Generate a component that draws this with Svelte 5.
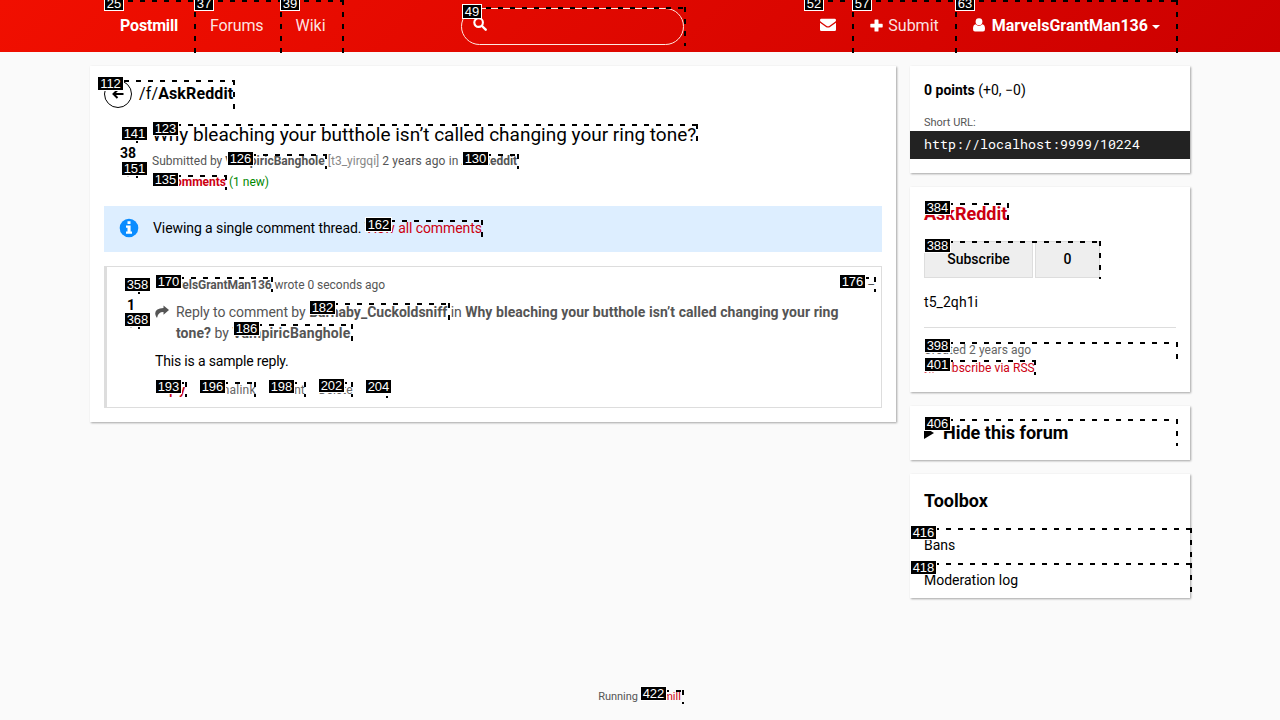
<script>
  // Element outlines: id, label x/y, outline left/top/right/bottom
  const marks = [
    [25, 104, -4, 104, 0, 196, 53],
    [37, 194, -4, 194, 0, 282, 53],
    [39, 280, -4, 280, 0, 344, 53],
    [49, 462, 4, 462, 7, 686, 46],
    [52, 804, -4, 804, 0, 854, 53],
    [57, 852, -4, 852, 0, 957, 53],
    [63, 955, -4, 955, 0, 1178, 53],
    [112, 97, 76, 100, 80, 235, 109],
    [141, 121, 126, 126, 129, 138, 143],
    [151, 121, 161, 126, 164, 138, 178],
    [123, 152, 121, 152, 124, 698, 142],
    [126, 227, 151, 227, 154, 327, 169],
    [130, 462, 151, 462, 154, 519, 169],
    [135, 152, 172, 152, 175, 227, 190],
    [162, 365, 217, 366, 220, 483, 237],
    [170, 155, 274, 155, 277, 273, 292],
    [176, 839, 274, 864, 277, 876, 292],
    [358, 124, 277, 128, 280, 140, 294],
    [368, 124, 312, 128, 315, 140, 329],
    [182, 309, 300, 309, 303, 450, 320],
    [186, 233, 321, 233, 324, 353, 341],
    [193, 155, 379, 155, 382, 187, 397],
    [196, 199, 379, 199, 382, 256, 397],
    [198, 268, 379, 268, 382, 306, 397],
    [202, 318, 378, 318, 382, 353, 397],
    [204, 365, 379, 365, 384, 388, 398],
    [384, 924, 200, 924, 203, 1009, 220],
    [388, 924, 238, 924, 241, 1101, 279],
    [398, 924, 338, 924, 342, 1178, 359],
    [401, 924, 357, 924, 360, 1036, 375],
    [406, 924, 416, 924, 419, 1178, 446],
    [416, 910, 525, 910, 528, 1192, 563],
    [418, 910, 560, 910, 563, 1192, 595],
    [422, 640, 686, 640, 690, 684, 704]
  ];
</script>

<header>
  <nav>
    <div class="group">
      <a class="item strong brand" href="#home">Postmill</a>
      <a class="item tight" href="#forums">Forums</a>
      <a class="item" href="#wiki">Wiki</a>
    </div>
    <div class="search">
      <svg width="14" height="14" viewBox="0 0 14 14"><circle cx="5.6" cy="5.6" r="4.3" fill="none" stroke="#fff" stroke-width="2.1" /><path d="M9 9l3.7 3.7" stroke="#fff" stroke-width="2.4" stroke-linecap="round" /></svg>
    </div>
    <div class="group">
      <a class="item" href="#mail" aria-label="Messages">
        <svg width="16" height="14" viewBox="0 0 16 14"><path fill="#fff" d="M0 2.2Q0 .8 1.4.8h13.2Q16 .8 16 2.2q0 1-1.2 1.9L9.600 7.700Q8 8.900 6.400 7.700L1.200 4.100Q0 3.200 0 2.200zM0 4.700l5.600 4Q8 10.500 10.400 8.700L16 4.700v7q0 1.400-1.400 1.400H1.400Q0 13.100 0 11.700z" /></svg>
      </a>
      <a class="item submit" href="#submit">
        <svg width="13" height="13" viewBox="0 0 13 13"><path fill="#fff" d="M5.100.5h2.800q.6 0 .6.6v3.700h3.600q.6 0 .6.6v2.400q0 .6-.6.6H8.500v3.500q0 .6-.6.6H5.100q-.6 0-.6-.6V8.400H.9q-.6 0-.6-.6V5.400q0-.6.600-.6h3.600V1.100q0-.6.6-.6z" /></svg>
        Submit
      </a>
      <a class="item strong user" href="#user">
        <svg width="12" height="14" viewBox="0 0 12 14"><circle cx="6" cy="3.700" r="3.400" fill="#fff" /><path fill="#fff" d="M2.700 6.200Q6 9.400 9.300 6.200 12 6.500 12 11q0 2.600-2 2.600H2Q0 13.600 0 11 0 6.500 2.700 6.200z" /></svg>
        <span>MarvelsGrantMan136</span>
        <i class="caret"></i>
      </a>
    </div>
  </nav>
</header>

<div class="layout">
  <main class="card">
    <div class="crumb">
      <span class="back"><svg width="12" height="10" viewBox="0 0 12 10"><path d="M11.500 5H1.500M5.500 1L1.500 5l4 4" fill="none" stroke="#000" stroke-width="2" /></svg></span>
      <span class="path">/f/<b>AskReddit</b></span>
    </div>

    <article class="submission">
      <div class="vote"><span class="arrow up"></span><b>38</b><span class="arrow down"></span></div>
      <div>
        <h1>Why bleaching your butthole isn’t called changing your ring tone?</h1>
        <p class="meta first">Submitted by <b class="author">VampiricBanghole</b> <span class="faint">[t3_yirgqi]</span> <span class="when">2 years ago in</span> <b>AskReddit</b></p>
        <p class="meta"><b class="red">32 comments</b> <span class="green">(1 new)</span></p>
      </div>
    </article>

    <div class="alert">
      <svg width="20" height="20" viewBox="0 0 20 20"><circle cx="10" cy="10" r="9.300" fill="#0a8cff" /><path fill="#fff" d="M8.500 3.300h3v2.700h-3zM7 7.500h4.600v6h1.400v2.200H7v-2.200h1.500V9.700H7z" /></svg>
      <span>Viewing a single comment thread. <a href="#all" class="red">View all comments</a></span>
    </div>

    <article class="comment">
      <div class="vote"><span class="arrow up active"></span><b>1</b><span class="arrow down"></span></div>
      <div class="body">
        <div class="head"><span><b>MarvelsGrantMan136</b> wrote 0 seconds ago</span><span class="collapse">–</span></div>
        <div class="context">
          <svg width="14" height="13" viewBox="0 0 14 13"><path fill="#555" d="M8.500.4L14 5 8.500 9.700V7.100Q3.200 6.900 2.200 12.600H1.500Q.2 10.500.2 8.300.5 3 8.500 2.900z" /></svg>
          <p><span class="lead">Reply to comment by</span> <b>Barnaby_Cuckoldsniff</b> <span class="lead">in</span> <b class="title">Why bleaching your butthole isn’t called changing your ring tone?</b> by <b class="target">VampiricBanghole</b></p>
        </div>
        <p class="reply">This is a sample reply.</p>
        <div class="actions"><b class="red">Reply</b><span class="perma">Permalink</span><span class="parent">Parent</span><span>Delete</span></div>
      </div>
    </article>
  </main>

  <aside>
    <section class="card points">
      <p><b>0 points</b> (+0, −0)</p>
      <p class="label">Short URL:</p>
      <div class="url">http://localhost:9999/10224</div>
    </section>

    <section class="card forum">
      <h2 class="red">AskReddit</h2>
      <div class="subscribe"><span>Subscribe</span><span>0</span></div>
      <p class="desc">t5_2qh1i</p>
      <hr />
      <p class="small">Created 2 years ago</p>
      <p class="small red rss"><svg width="10" height="10" viewBox="0 0 10 10"><circle cx="1.500" cy="8.500" r="1.300" fill="#c01" /><path d="M.5 4.200a5.300 5.300 0 0 1 5.300 5.300M.5 1a8.500 8.500 0 0 1 8.500 8.500" fill="none" stroke="#c01" stroke-width="1.400" /></svg>Subscribe via RSS</p>
    </section>

    <section class="card hide">
      <h2><i class="triangle"></i>Hide this forum</h2>
    </section>

    <section class="card toolbox">
      <h2>Toolbox</h2>
      <p>Bans</p>
      <p>Moderation log</p>
    </section>
  </aside>
</div>

<footer>Running <a href="#postmill" class="red">Postmill</a></footer>

<div class="marks">
  {#each marks as [id, lx, ly, x, y, r, b]}
    <div class="outline" style="left:{x}px;top:{y}px;width:{r - x}px;height:{b - y}px"></div>
  {/each}
  {#each marks as [id, lx, ly]}
    <span class="tag" class:wide={id > 99} style="left:{lx}px;top:{ly}px">{id}</span>
  {/each}
</div>

<style>
  :global(body) { background: #fafafa; font: 14px/21px Roboto, sans-serif; color: #000; overflow: hidden; }
  :global(#app) { height: 720px; display: flex; flex-direction: column; position: relative; overflow: hidden; }
  p, h1, h2 { margin: 0; }
  a { color: inherit; text-decoration: none; }
  svg { display: block; flex: none; }
  .red { color: #c01; }
  header { flex: none; height: 52px; background: linear-gradient(135deg, #f10f00, #c00); }
  nav { width: 1072px; height: 52px; margin: 0 auto; display: flex; justify-content: space-between; align-items: center; }
  .group { display: flex; height: 50px; margin-bottom: 2px; }
  .item { display: flex; align-items: center; padding: 0 16px; font-size: 16px; color: rgba(255, 255, 255, .9); }
  .item.strong { font-weight: 700; color: #fff; }
  .brand { letter-spacing: -.18px; }
  .tight { letter-spacing: -.15px; }
  .submit { padding: 0 17px 0 18px; gap: 5px; }
  .user { gap: 6px; padding-left: 17px; }
  .user svg { margin-right: 1px; }
  .caret { border: 4px solid transparent; border-top-color: #fff; border-bottom: 0; margin: 4px 0 0 -2px; }
  .search { box-sizing: border-box; width: 223px; height: 37px; margin-top: 1px; border: 1px solid #ffe8e0; border-radius: 19px; padding: 8px 11px; }

  .layout { width: 1100px; margin: 14px auto 0; display: flex; gap: 14px; align-items: flex-start; }
  .card { background: #fff; box-shadow: 1px 1px 2px rgba(0, 0, 0, .35); box-sizing: border-box; }
  main { width: 806px; height: 356px; padding: 14px; }
  .crumb { display: flex; align-items: center; gap: 7px; height: 28px; font-size: 16px; }
  .path { padding-bottom: 2px; letter-spacing: .12px; }
  .back { box-sizing: border-box; width: 28px; height: 28px; border: 1px solid #000; border-radius: 50%; display: flex; align-items: center; justify-content: center; }
  .submission { display: flex; height: 84px; margin-top: 14px; }
  .vote { display: flex; flex-direction: column; align-items: center; width: 48px; font-size: 14px; }
  .arrow { width: 8px; height: 8px; border-left: 2px solid #bbb; border-top: 2px solid #bbb; transform: rotate(45deg); }
  .arrow.down { transform: rotate(225deg); }
  .arrow.active { border-color: #f70; }
  .submission .vote { padding-top: 10px; height: 60px; box-sizing: border-box; line-height: 23px; }
  h1 { font-size: 19px; font-weight: 400; line-height: 25px; }
  .meta { font-size: 12px; color: #555; line-height: 21px; }
  .meta.first { margin-top: 4px; }
  .author { letter-spacing: .04px; }
  .when { letter-spacing: .16px; }
  .faint { color: #888; }
  .green { color: #080; }
  .alert { box-sizing: border-box; display: flex; align-items: center; gap: 14px; height: 46px; padding: 0 0 2px 15px; background: #def; letter-spacing: -.08px; }
  .comment { box-sizing: border-box; display: flex; height: 142px; margin-top: 14px; border: 1px solid #ddd; border-left-width: 3px; }
  .comment .vote { padding-top: 17px; height: 60px; box-sizing: border-box; line-height: 22px; }
  .body { flex: 1; padding: 8px 6px 0 0; }
  .head { display: flex; justify-content: space-between; font-size: 12px; color: #555; letter-spacing: -.03px; }
  .context { display: flex; gap: 7px; margin-top: 6px; color: #555; }
  .context svg { margin-top: 3px; }
  .context p { width: 680px; }
  .lead { letter-spacing: -.06px; }
  .title { letter-spacing: .05px; }
  .target { letter-spacing: .16px; }
  .reply { margin-top: 7px; letter-spacing: -.17px; }
  .actions { display: flex; gap: 14px; margin-top: 8px; font-size: 12px; color: #666; }
  .perma { letter-spacing: .25px; }
  .actions .red { width: 31px; }

  aside { width: 280px; display: flex; flex-direction: column; gap: 14px; }
  .points { height: 107px; padding-top: 14px; }
  .points p { padding: 0 14px; }
  .points .label { font-size: 11px; color: #555; line-height: 16px; margin-top: 14px; }
  .url { height: 28px; box-sizing: border-box; padding-left: 14px; background: #222; color: #fff; font: 13.330px/27px "Roboto Mono", "Liberation Mono", monospace; }
  .forum { height: 205px; padding: 14px; }
  h2 { font-size: 18px; font-weight: 700; line-height: 26px; }
  .subscribe { display: flex; gap: 2px; margin-top: 14px; font-weight: 500; }
  .subscribe span { box-sizing: border-box; width: 109px; height: 37px; line-height: 35px; text-align: center; background: #eee; border: 1px solid #ddd; }
  .subscribe span + span { width: 65px; }
  .desc { margin-top: 14px; letter-spacing: .06px; }
  hr { border: 0; border-top: 1px solid #ddd; margin: 14px 0 13px; }
  .small { font-size: 12px; line-height: 18px; letter-spacing: .05px; }
  .small:not(.red) { color: #666; }
  .rss { display: flex; align-items: center; gap: 4px; }
  .hide { height: 54px; padding: 14px; }
  .hide h2 { display: flex; align-items: center; }
  .triangle { border: 6px solid transparent; border-left: 10px solid #000; border-right: 0; margin-right: 9px; }
  .toolbox { height: 124px; padding: 14px; }
  .toolbox h2 { margin-bottom: 14px; }
  .toolbox p { line-height: 35px; }
  footer { margin-top: auto; padding: 0 1px 15px 0; text-align: center; font-size: 11px; line-height: 16px; color: #555; }

  .marks { position: absolute; inset: 0; pointer-events: none; }
  .outline { position: absolute; background:
    repeating-linear-gradient(90deg, #000 0 5px, transparent 5px 12px) 0 0 / 100% 2px no-repeat,
    repeating-linear-gradient(180deg, #000 0 5px, transparent 5px 12px) 100% 0 / 2px 100% no-repeat; }
  .tag { position: absolute; box-sizing: border-box; width: 20px; height: 15px; border: 1px solid #fff; background: #000; color: #fff; font: 13px/13px "Liberation Sans", sans-serif; text-align: center; }
  .tag.wide { width: 27px; }
</style>
